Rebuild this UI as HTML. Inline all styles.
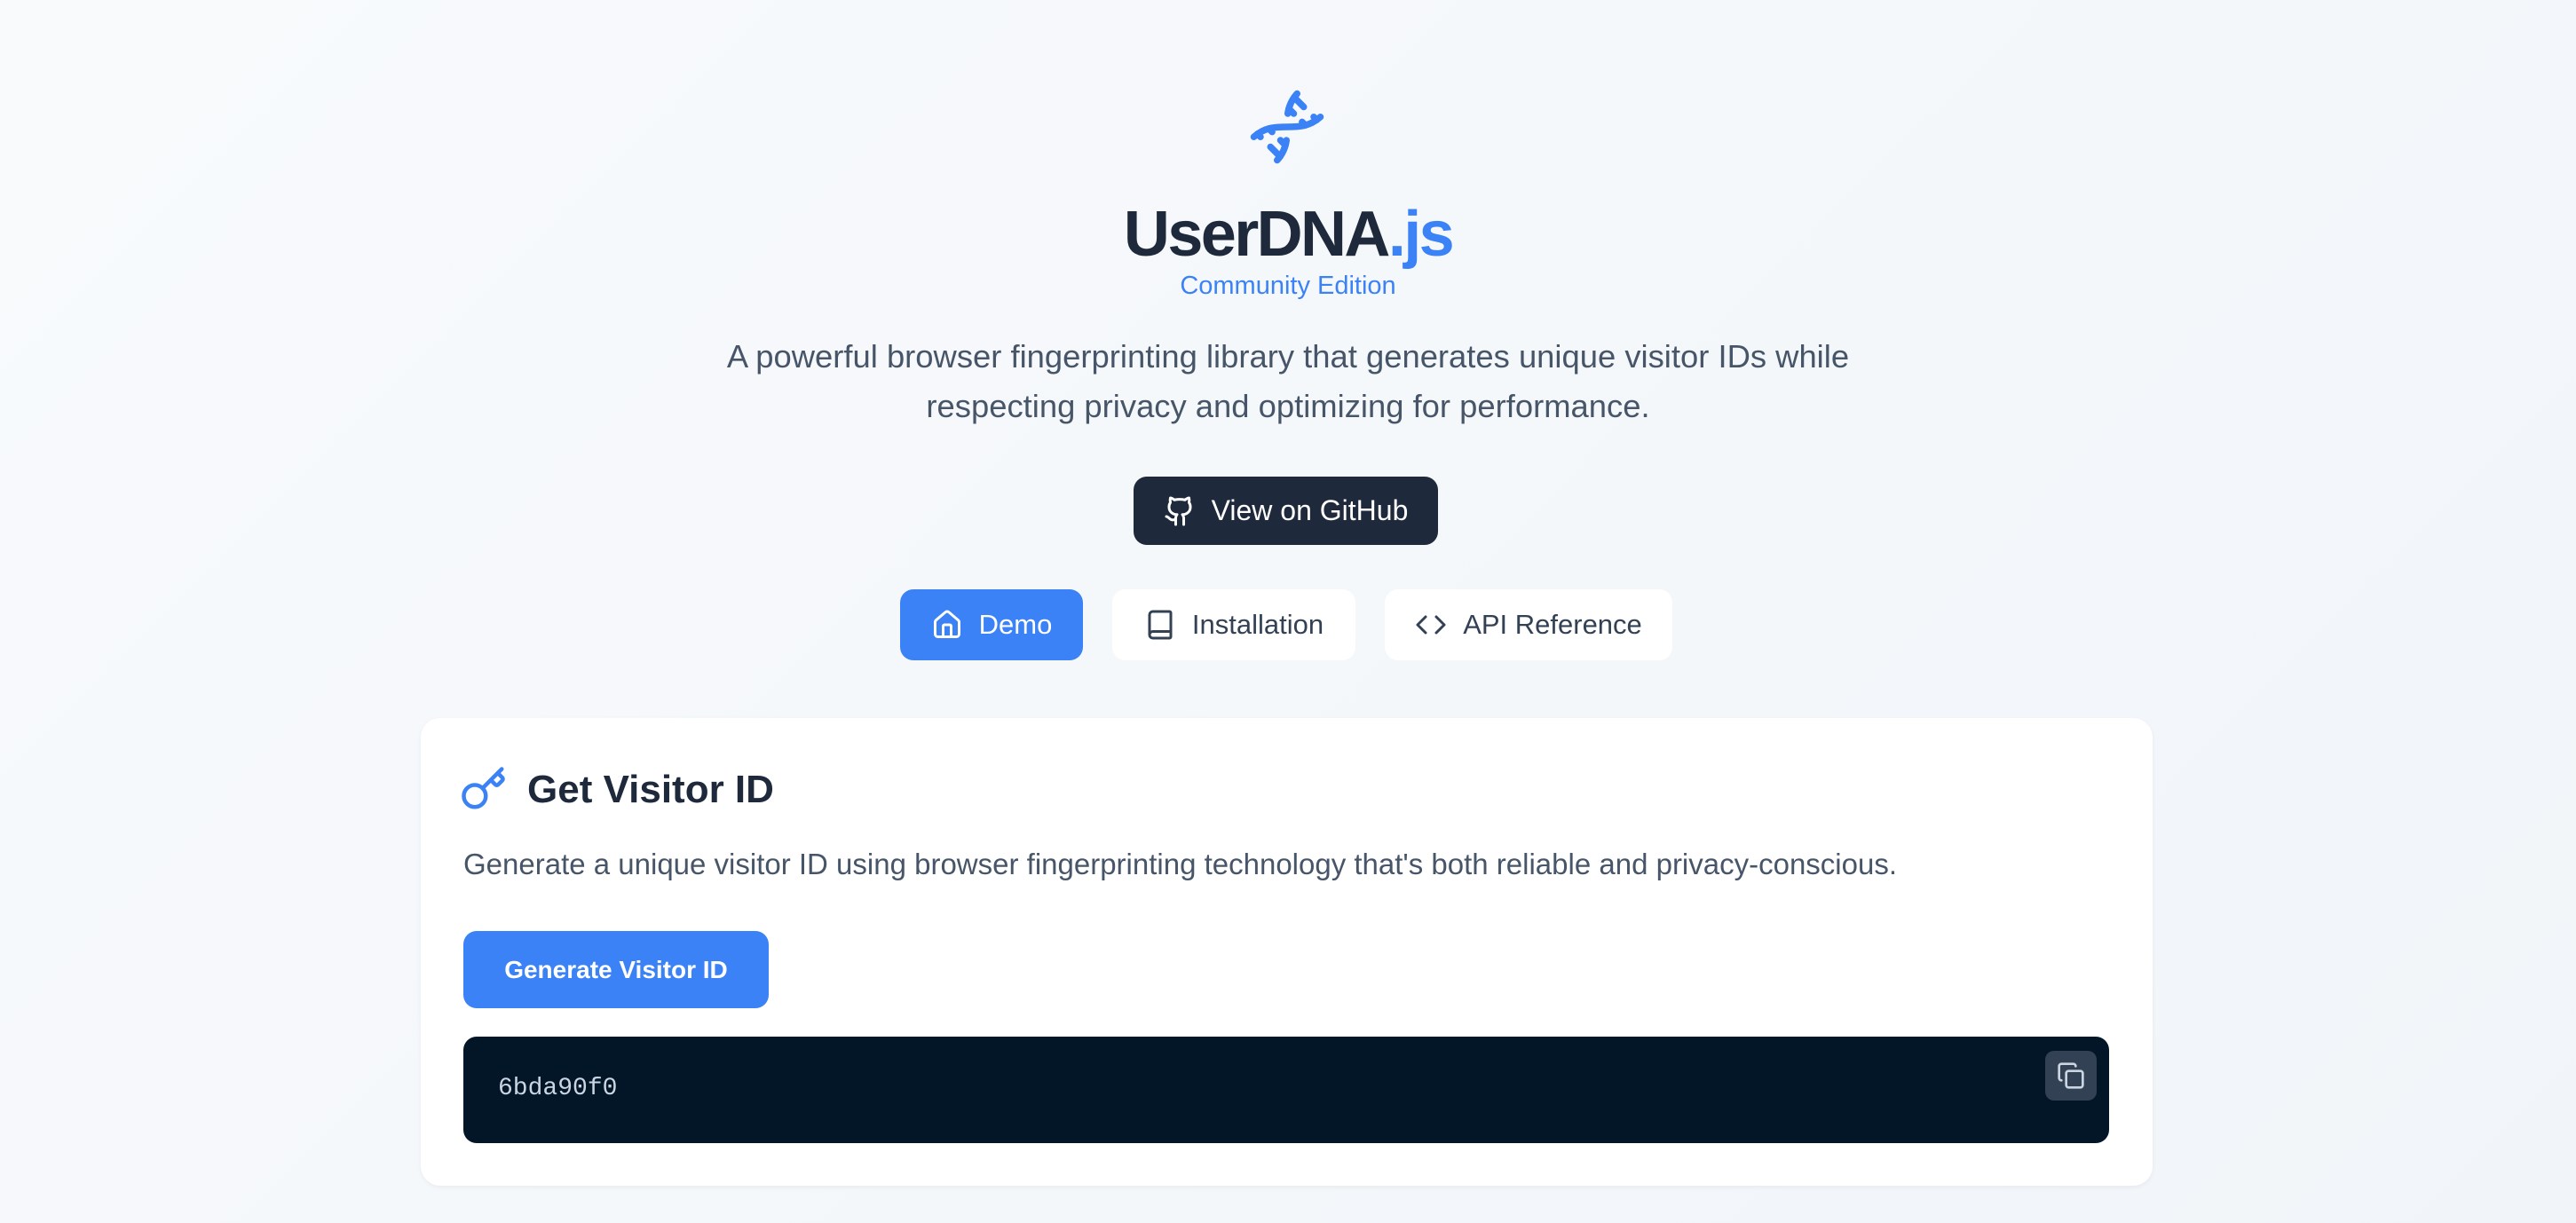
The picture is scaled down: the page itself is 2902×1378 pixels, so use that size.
<!DOCTYPE html>
<html><head><meta charset="utf-8"><style>
*{margin:0;padding:0;box-sizing:border-box}
body{width:2902px;height:1378px;background:linear-gradient(135deg,#f8fafc,#f1f5f9);font-family:"Liberation Sans",sans-serif;position:relative;overflow:hidden}
.a{position:absolute}
svg{fill:none;stroke-linecap:round;stroke-linejoin:round}
.c{text-align:center;left:0;width:2902px}
.btn{display:flex;align-items:center;justify-content:center;gap:18px;border-radius:15px;font-size:31px}
</style></head><body>
<svg class="a" style="left:1405px;top:98px" width="90" height="90" viewBox="0 0 24 24" stroke="#3b82f6" stroke-width="2"><path d="m10 16 1.5 1.5"/><path d="m14 8-1.5-1.5"/><path d="M15 2c-1.798 1.998-2.518 3.995-2.807 5.993"/><path d="m16.5 10.5 1 1"/><path d="m17 6-2.891-2.891"/><path d="M2 15c6.667-6 13.333 0 20-6"/><path d="m20 9 .891.891"/><path d="M3.109 14.109 4 15"/><path d="m6.5 12.5 1 1"/><path d="m7 18 2.891 2.891"/><path d="M9 22c1.798-1.998 2.518-3.995 2.807-5.993"/></svg>
<div class="a c" style="top:222px;font-size:72px;font-weight:bold;color:#1e293b;letter-spacing:-2.6px;line-height:84px">UserDNA<span style="color:#3b82f6">.js</span></div>
<div class="a c" style="top:305px;font-size:29px;color:#3b82f6;line-height:34px">Community Edition</div>
<div class="a c" style="top:374px;font-size:36.4px;color:#475569;line-height:56px">A powerful browser fingerprinting library that generates unique visitor IDs while<br>respecting privacy and optimizing for performance.</div>
<div class="a btn" style="left:1277px;top:537px;width:343px;height:77px;background:#1e293b;color:#fff;font-size:32px">
<svg width="36" height="36" viewBox="0 0 24 24" stroke="#fff" stroke-width="2"><path d="M15 22v-4a4.8 4.8 0 0 0-1-3.5c3 0 6-2 6-5.5.08-1.25-.27-2.48-1-3.5.28-1.150.28-2.35 0-3.5 0 0-1 0-3 1.5-2.64-.5-5.360-.5-8 0C6 2 5 2 5 2c-.3 1.15-.3 2.35 0 3.5A5.403 5.403 0 0 0 4 9c0 3.5 3 5.5 6 5.5-.39.49-.68 1.05-.85 1.65-.17.6-.22 1.23-.15 1.85v4"/><path d="M9 18c-4.51 2-5-2-7-2"/></svg>View on GitHub</div>
<div class="a btn" style="left:1014px;top:664px;width:206px;height:80px;background:#3b82f6;color:#fff">
<svg width="36" height="36" viewBox="0 0 24 24" stroke="#fff" stroke-width="2"><path d="M15 21v-8a1 1 0 0 0-1-1h-4a1 1 0 0 0-1 1v8"/><path d="M3 10a2 2 0 0 1 .709-1.528l7-5.999a2 2 0 0 1 2.582 0l7 5.999A2 2 0 0 1 21 10v9a2 2 0 0 1-2 2H5a2 2 0 0 1-2-2z"/></svg>Demo</div>
<div class="a btn" style="left:1253px;top:664px;width:274px;height:80px;background:#fff;color:#334155">
<svg width="36" height="36" viewBox="0 0 24 24" stroke="#334155" stroke-width="2"><path d="M4 19.5v-15A2.5 2.5 0 0 1 6.5 2H19a1 1 0 0 1 1 1v18a1 1 0 0 1-1 1H6.5a1 1 0 0 1 0-5H20"/></svg>Installation</div>
<div class="a btn" style="left:1560px;top:664px;width:324px;height:80px;background:#fff;color:#334155">
<svg width="36" height="36" viewBox="0 0 24 24" stroke="#334155" stroke-width="2"><polyline points="16 18 22 12 16 6"/><polyline points="8 6 2 12 8 18"/></svg>API Reference</div>
<div class="a" style="left:474px;top:809px;width:1951px;height:527px;background:#fff;border-radius:22px;box-shadow:0 2px 6px rgba(0,0,0,0.05)"></div>
<svg class="a" style="left:518px;top:862px" width="54" height="54" viewBox="0 0 24 24" stroke="#3b82f6" stroke-width="2"><path d="m15.5 7.5 2.3 2.3a1 1 0 0 0 1.4 0l2.1-2.1a1 1 0 0 0 0-1.4L19 4"/><path d="m21 2-9.6 9.6"/><circle cx="7.5" cy="15.5" r="5.5"/></svg>
<div class="a" style="left:594px;top:862px;font-size:44px;font-weight:bold;color:#1e293b;line-height:56px">Get Visitor ID</div>
<div class="a" style="left:522px;top:954px;font-size:33px;color:#475569;line-height:40px">Generate a unique visitor ID using browser fingerprinting technology that's both reliable and privacy-conscious.</div>
<div class="a btn" style="left:522px;top:1049px;width:344px;height:87px;background:#3b82f6;color:#fff;font-size:28px;font-weight:bold">Generate Visitor ID</div>
<div class="a" style="left:522px;top:1168px;width:1854px;height:120px;background:#021628;border-radius:15px"></div>
<div class="a" style="left:561px;top:1210px;font-family:'Liberation Mono',monospace;font-size:28px;color:#cbd5e1;line-height:34px">6bda90f0</div>
<div class="a" style="left:2304px;top:1184px;width:58px;height:56px;background:#334155;border-radius:10px;display:flex;align-items:center;justify-content:center">
<svg width="32" height="32" viewBox="0 0 24 24" stroke="#cbd5e1" stroke-width="2"><rect width="14" height="14" x="8" y="8" rx="2" ry="2"/><path d="M4 16c-1.1 0-2-.9-2-2V4c0-1.1.9-2 2-2h10c1.1 0 2 .9 2 2"/></svg></div>
</body></html>
